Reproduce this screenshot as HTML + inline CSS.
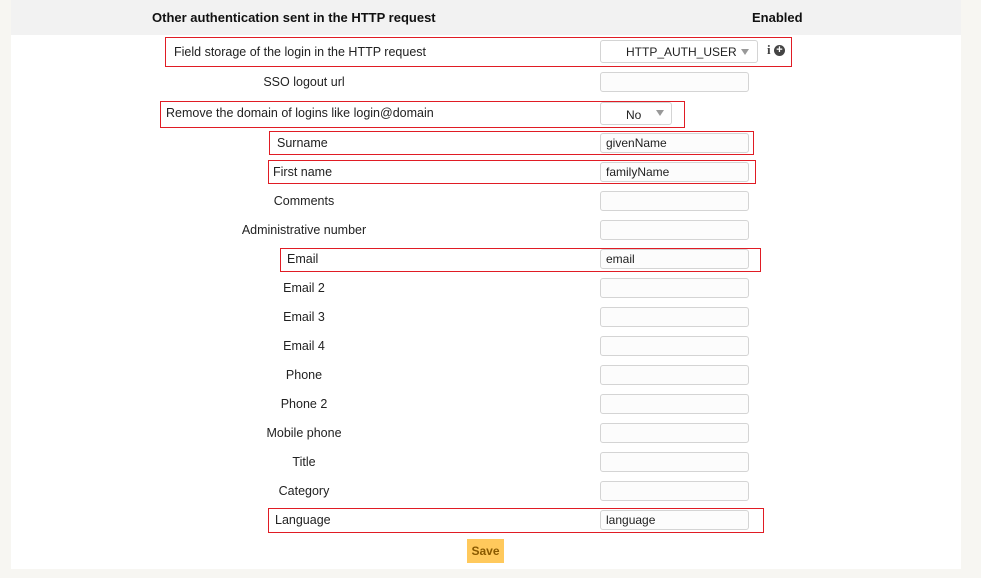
<!DOCTYPE html>
<html><head><meta charset="utf-8"><style>
body{margin:0;width:981px;height:578px;background:#f7f6f2;font-family:"Liberation Sans","DejaVu Sans",sans-serif;font-size:12px;color:#222;position:relative;overflow:hidden}
.panel{position:absolute;left:11px;top:0;width:950px;height:569px;background:#fff}
.hdr{position:absolute;left:11px;top:0;width:950px;height:35px;background:#f2f2f2}
.h{position:absolute;top:10px;font-weight:bold;font-size:13px;color:#111}
.lab{position:absolute;left:204px;width:200px;text-align:center;white-space:nowrap;font-size:12.5px;line-height:14px}
.in{position:absolute;left:600px;width:147px;height:18px;border:1px solid #d4d4d4;border-radius:3px;background:#fcfcfc;box-sizing:content-box;font-size:12px;line-height:18px;padding-left:0}
.in span{padding-left:5px}
.box{position:absolute;border:1px solid #e01c24}
.sel{position:absolute;border:1px solid #d4d4d4;border-radius:3px;background:#fff;font-size:12px;line-height:20px}
.arr{position:absolute;width:0;height:0;border-left:4px solid transparent;border-right:4px solid transparent;border-top:6px solid #999}
.save{position:absolute;left:467px;top:539px;width:37px;height:24px;background:#ffc95c;color:#8a5a00;font-weight:bold;font-size:12px;line-height:24px;text-align:center}
</style></head><body>
<div class="panel"></div>
<div class="hdr"></div>
<div class="h" style="left:152px">Other authentication sent in the HTTP request</div>
<div class="h" style="left:752px">Enabled</div>

<div class="box" style="left:165px;top:37px;width:625px;height:28px"></div>
<div class="lab" style="left:174px;width:auto;text-align:left;top:45px">Field storage of the login in the HTTP request</div>
<div class="sel" style="left:600px;top:40px;width:156px;height:21px"><span style="position:absolute;left:25px;top:1px">HTTP_AUTH_USER</span><div class="arr" style="left:140px;top:8px"></div></div>
<div style="position:absolute;left:767px;top:42px;font-weight:bold;font-size:13px;color:#444;font-family:'Liberation Serif',serif">i</div>
<div style="position:absolute;left:774px;top:45px;width:11px;height:11px;border-radius:50%;background:#444;color:#fff;font-size:11px;line-height:11px;text-align:center;font-weight:bold">+</div>

<div class="lab" style="top:75px">SSO logout url</div>
<div class="in" style="top:72px"></div>

<div class="box" style="left:160px;top:101px;width:523px;height:25px"></div>
<div class="lab" style="left:166px;width:auto;text-align:left;top:106px">Remove the domain of logins like login@domain</div>
<div class="sel" style="left:600px;top:102px;width:70px;height:21px"><span style="position:absolute;left:25px;top:2px">No</span><div class="arr" style="left:55px;top:7px"></div></div>

<div class="box" style="left:269px;top:131px;width:483px;height:22px"></div>
<div class="lab" style="left:277px;width:auto;text-align:left;top:136px">Surname</div>
<div class="in" style="top:133px"><span>givenName</span></div>

<div class="box" style="left:268px;top:160px;width:486px;height:22px"></div>
<div class="lab" style="left:273px;width:auto;text-align:left;top:165px">First name</div>
<div class="in" style="top:162px"><span>familyName</span></div>

<div class="lab" style="top:194px">Comments</div><div class="in" style="top:191px"></div>
<div class="lab" style="top:223px">Administrative number</div><div class="in" style="top:220px"></div>

<div class="box" style="left:280px;top:248px;width:479px;height:22px"></div>
<div class="lab" style="left:287px;width:auto;text-align:left;top:252px">Email</div>
<div class="in" style="top:249px"><span>email</span></div>

<div class="lab" style="top:281px">Email 2</div><div class="in" style="top:278px"></div>
<div class="lab" style="top:310px">Email 3</div><div class="in" style="top:307px"></div>
<div class="lab" style="top:339px">Email 4</div><div class="in" style="top:336px"></div>
<div class="lab" style="top:368px">Phone</div><div class="in" style="top:365px"></div>
<div class="lab" style="top:397px">Phone 2</div><div class="in" style="top:394px"></div>
<div class="lab" style="top:426px">Mobile phone</div><div class="in" style="top:423px"></div>
<div class="lab" style="top:455px">Title</div><div class="in" style="top:452px"></div>
<div class="lab" style="top:484px">Category</div><div class="in" style="top:481px"></div>

<div class="box" style="left:268px;top:508px;width:494px;height:23px"></div>
<div class="lab" style="left:275px;width:auto;text-align:left;top:513px">Language</div>
<div class="in" style="top:510px"><span>language</span></div>

<div class="save">Save</div>
</body></html>
